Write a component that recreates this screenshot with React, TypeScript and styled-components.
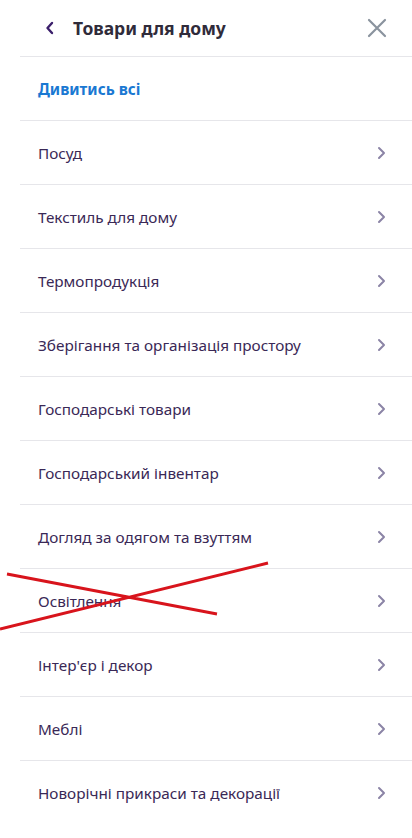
import React from 'react';
import styled, { createGlobalStyle } from 'styled-components';

const GlobalStyle = createGlobalStyle`
  *, *::before, *::after {
    box-sizing: border-box;
  }
  html, body {
    margin: 0;
    padding: 0;
    background: #fff;
  }
  body {
    font-family: 'Noto Sans', 'Open Sans', sans-serif;
  }
`;

const Page = styled.div`
  position: relative;
  width: 412px;
  min-height: 838px;
  overflow: hidden;
  background: #fff;
`;

const Header = styled.div`
  display: flex;
  align-items: center;
  height: 57px;
  margin-left: 20px;
  padding: 0 24px 0 22px;
  border-bottom: 1px solid #e6e6ea;
`;

const BackButton = styled.button`
  display: flex;
  align-items: center;
  justify-content: center;
  width: 16px;
  height: 24px;
  padding: 0;
  margin-right: 15px;
  border: 0;
  background: none;
`;

const Title = styled.h1`
  flex: 1;
  margin: 0;
  font-size: 17.5px;
  font-weight: 700;
  color: #2f2b3a;
`;

const CloseButton = styled.button`
  display: flex;
  align-items: center;
  justify-content: center;
  width: 22px;
  height: 22px;
  padding: 0;
  border: 0;
  background: none;
`;

const List = styled.ul`
  list-style: none;
  margin: 0 0 0 20px;
  padding: 0;
`;

const Row = styled.li`
  display: flex;
  align-items: center;
  justify-content: space-between;
  height: 64px;
  padding: 0 26px 0 18px;
  border-bottom: 1px solid #e6e6ea;
  &:last-child {
    border-bottom: 0;
  }
`;

const Label = styled.span<{ $accent?: boolean }>`
  font-size: 15.3px;
  font-weight: ${p => (p.$accent ? 700 : 400)};
  color: ${p => (p.$accent ? '#1a78d2' : '#3a2856')};
`;

const Strike = styled.svg`
  position: absolute;
  left: 0;
  top: 0;
  pointer-events: none;
`;

const items = [
  'Посуд',
  'Текстиль для дому',
  'Термопродукція',
  'Зберігання та організація простору',
  'Господарські товари',
  'Господарський інвентар',
  'Догляд за одягом та взуттям',
  'Освітлення',
  "Інтер'єр і декор",
  'Меблі',
  'Новорічні прикраси та декорації',
];

const Chevron = () => (
  <svg width="10" height="14" viewBox="0 0 10 14">
    <path d="M3 2l5 5-5 5" fill="none" stroke="#8b84a6" strokeWidth="2" strokeLinecap="round" strokeLinejoin="round" />
  </svg>
);

export default function App() {
  return (
    <Page>
      <GlobalStyle />
      <Header>
        <BackButton>
          <svg width="10" height="14" viewBox="0 0 10 14">
            <path d="M7 2L2.5 7 7 12" fill="none" stroke="#3b1f6b" strokeWidth="2.4" strokeLinecap="round" strokeLinejoin="round" />
          </svg>
        </BackButton>
        <Title>Товари для дому</Title>
        <CloseButton>
          <svg width="20" height="20" viewBox="0 0 20 20">
            <path d="M2 2l16 16M18 2L2 18" stroke="#8a939e" strokeWidth="2.2" strokeLinecap="round" />
          </svg>
        </CloseButton>
      </Header>
      <List>
        <Row>
          <Label $accent>Дивитись всі</Label>
        </Row>
        {items.map(name => (
          <Row key={name}>
            <Label>{name}</Label>
            <Chevron />
          </Row>
        ))}
      </List>
      <Strike width="412" height="838" viewBox="0 0 412 838">
        <path d="M7 574L217 614M0 629L268 563" stroke="#d8141c" strokeWidth="3" />
      </Strike>
    </Page>
  );
}
